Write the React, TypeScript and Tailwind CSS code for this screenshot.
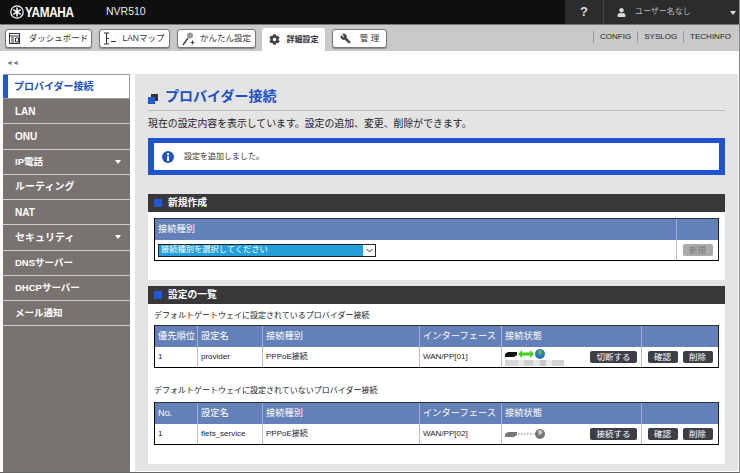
import { ChevronDown, Wrench } from 'lucide-react';
import { FaCog, FaUser } from 'react-icons/fa';

const JP = "font-['Liberation_Sans','Noto_Sans_CJK_JP',sans-serif]";

const menu = [
  { label: 'LAN', big: true },
  { label: 'ONU', big: true },
  { label: 'IP電話', arrow: true },
  { label: 'ルーティング', big: true },
  { label: 'NAT', big: true },
  { label: 'セキュリティ', arrow: true, big: true },
  { label: 'DNSサーバー' },
  { label: 'DHCPサーバー' },
  { label: 'メール通知' },
];

function DashIcon() {
  return (
    <svg width="11" height="11" viewBox="0 0 11 11" fill="none" stroke="#333" strokeWidth="1">
      <rect x="0.5" y="0.5" width="10" height="10" />
      <path d="M0.5 3H10.5M2 5H5M2 7H5M2 9H5M6.5 5H9.5V9H6.5Z" />
    </svg>
  );
}

function MapIcon() {
  return (
    <svg width="12" height="13" viewBox="0 0 12 13" fill="none" stroke="#333" strokeWidth="1">
      <path d="M0 1H5M2.5 1V12M0 12H5M2.5 6.5H5M7 9.5H12" />
    </svg>
  );
}

function WandIcon() {
  return (
    <svg width="13" height="14" viewBox="0 0 13 14" fill="none">
      <path d="M1 13L6 6" stroke="#444" strokeWidth="1.4" />
      <circle cx="8" cy="3.5" r="3" fill="#999" />
      <path d="M8.5 10.5H12.5M10.5 8.5V12.5" stroke="#444" strokeWidth="1" />
    </svg>
  );
}

function Tab({ icon, label, gap = 'gap-[9px]', w }: { icon: React.ReactNode; label: string; gap?: string; w: string }) {
  return (
    <div className={`flex h-[19px] items-center justify-center rounded-[3px] border border-[#777] bg-white text-[8.5px] text-[#333] shadow-[0_1px_1px_#888] ${gap} ${w}`}>
      {icon}
      <span>{label}</span>
    </div>
  );
}

function SectionHead({ title }: { title: string }) {
  return (
    <div className="flex h-[18px] items-center gap-[6px] bg-[#383838] pl-[6px] text-[9.75px] font-bold text-white">
      <span className="h-[8px] w-[8px] bg-[#2058d8]" />
      {title}
    </div>
  );
}

function DarkBtn({ label, w }: { label: string; w: string }) {
  return (
    <span className={`flex h-[12px] items-center justify-center rounded-[2px] bg-[#3c3f48] text-[8.5px] text-white ${w}`}>{label}</span>
  );
}

function Status({ up }: { up: boolean }) {
  return (
    <div className="flex flex-col gap-[1px]">
      <svg width="42" height="10" viewBox="0 0 42 10">
        <path d="M0 5L3 3H12V6L9 8H0Z" fill={up ? '#111' : '#777'} />
        {up ? (
          <path d="M13 5L17 1V3.5H25V1L29 5L25 9V6.5H17V9Z" fill="#44d018" />
        ) : (
          <path d="M13 5H29" stroke="#bbb" strokeWidth="2" strokeDasharray="1.5 1.5" />
        )}
        <circle cx="35" cy="5" r="5" fill={up ? '#2a78b8' : '#777'} />
        <path d="M33 1.5L36.5 1L37.5 4L34 6.5Z" fill={up ? '#5cb85c' : '#ccc'} />
      </svg>
      {up && (
        <div className="flex h-[6px] w-[59px]">
          <span className="w-[13px] bg-[#d8d8d8]" />
          <span className="w-[6px] bg-[#e8e8e8]" />
          <span className="w-[9px] bg-[#d0d0d0]" />
          <span className="w-[7px] bg-[#e4e4e4]" />
          <span className="w-[6px] bg-[#c8c8c8]" />
          <span className="w-[6px] bg-[#ececec]" />
          <span className="w-[12px] bg-[#d4d4d4]" />
        </div>
      )}
    </div>
  );
}

function ConnTable({ first, firstValue, name, pp, up }: { first: string; firstValue: string; name: string; pp: string; up: boolean }) {
  const head = 'flex items-center whitespace-nowrap border-r border-[#9db0d6] pl-[3px]';
  const cell = 'flex items-center border-r border-[#bbb] pl-[3px]';
  return (
    <div className="mx-[6px] border-b border-l border-r border-b-black border-l-black border-r-[#222]">
      <div className="grid h-[22px] grid-cols-[43px_65px_157px_82px_140px_1fr] border-t border-[#333] bg-[#6480b9] text-[9.25px] text-white">
        <div className={head}>{first}</div>
        <div className={head}>設定名</div>
        <div className={head}>接続種別</div>
        <div className={head}>インターフェース</div>
        <div className={head}>接続状態</div>
        <div />
      </div>
      <div className="grid h-[20px] grid-cols-[43px_65px_157px_82px_140px_1fr] bg-white text-[8px] text-[#222]">
        <div className={cell}>{firstValue}</div>
        <div className={cell}>{name}</div>
        <div className={cell}>PPPoE接続</div>
        <div className={cell}>WAN/PP[{pp}]</div>
        <div className={`${cell} justify-between pr-[4px]`}>
          <Status up={up} />
          <DarkBtn label={up ? '切断する' : '接続する'} w="w-[47px]" />
        </div>
        <div className="flex items-center justify-center gap-[5px]">
          <DarkBtn label="確認" w="w-[30px]" />
          <DarkBtn label="削除" w="w-[30px]" />
        </div>
      </div>
    </div>
  );
}

export default function App() {
  return (
    <div className={`${JP} flex h-[473px] w-[740px] flex-col overflow-hidden border-b border-r border-b-[#666] border-r-[#888] bg-white`}>
      <div className="flex h-[24px] items-center bg-[#0f0f0f] text-white">
        <svg className="ml-[10px]" width="14" height="14" viewBox="0 0 14 14" fill="none" stroke="#fff">
          <circle cx="7" cy="7" r="6.2" strokeWidth="1.2" />
          <path d="M7 2.5V11.5M3.2 4.7L10.8 9.3M3.2 9.3L10.8 4.7" strokeWidth="1.5" />
        </svg>
        <span className="ml-[1px] w-[48px] origin-left scale-x-[0.84] text-[14px] font-bold tracking-tight">YAMAHA</span>
        <span className="ml-[33px] text-[10.5px] text-[#e8e8e8]">NVR510</span>
        <div className="ml-auto flex h-full w-[174px] bg-[#2a2c2e] text-[#ddd]">
          <div className="flex w-[39px] items-center justify-center border-r border-[#444] text-[13px] font-bold">?</div>
          <div className="flex flex-1 items-center pl-[13px] text-[8px] text-[#bbb]">
            <FaUser size={9} color="#ddd" />
            <span className="ml-[9px]">ユーザー名なし</span>
            <span className="ml-auto mr-[3px] mt-[1px] h-0 w-0 border-x-[3px] border-t-[4px] border-x-transparent border-t-[#ddd]" />
          </div>
        </div>
      </div>

      <div className="flex h-[27px] items-end border-t border-[#777] bg-[#c9c9c9]">
        <div className="mb-[3px] ml-[5px] flex gap-[7px]">
          <Tab icon={<DashIcon />} label="ダッシュボード" w="w-[87px]" />
          <Tab icon={<MapIcon />} label="LANマップ" gap="gap-[6px]" w="w-[71px]" />
          <Tab icon={<WandIcon />} label="かんたん設定" gap="gap-[5px]" w="w-[79px]" />
        </div>
        <div className="ml-[6px] flex h-[23px] w-[63px] items-center justify-center gap-[7px] rounded-t-[3px] bg-white text-[8px] font-bold text-[#333]">
          <FaCog size={11} color="#444" />
          詳細設定
        </div>
        <div className="mb-[3px] ml-[7px]">
          <Tab icon={<Wrench size={11} fill="#444" stroke="#444" className="-scale-x-100" />} label="管 理" w="w-[55px]" />
        </div>
        <div className="mb-[8px] ml-auto mr-[8px] flex text-[8px] text-[#222]">
          <span className="border-l border-[#999] px-[6px]">CONFIG</span>
          <span className="border-l border-[#999] px-[6px]">SYSLOG</span>
          <span className="border-l border-[#999] pl-[6px]">TECHINFO</span>
        </div>
      </div>

      <div className="flex flex-1 flex-col">
        <div className="flex h-[23px] items-center pl-[6px] text-[7px] leading-none tracking-[-1px] text-[#777]">◄◄</div>
        <div className="flex flex-1 gap-[5px]">
          <div className="ml-[3px] flex w-[127px] flex-col bg-[#787370]">
            <div className="flex h-[25px] shrink-0 items-center border border-l-0 border-[#999] bg-white">
              <span className="h-full w-[5px] bg-[#2058d8]" />
              <span className="ml-[6px] text-[10px] font-bold text-[#1a50c8]">プロバイダー接続</span>
            </div>
            {menu.map((item) => (
              <div key={item.label} className="flex h-[25.25px] items-center border-b border-[#cfcdcb] pl-[12px] pr-[9px] font-bold text-white">
                <span className={item.big ? 'text-[10px]' : 'text-[9.5px]'}>{item.label}</span>
                {item.arrow && <span className="ml-auto h-0 w-0 border-x-[3px] border-t-[4px] border-x-transparent border-t-white" />}
              </div>
            ))}
          </div>

          <div className="mb-[1px] mr-[1px] flex flex-1 flex-col bg-[#e4e4e4] px-[13px]">
            <div className="flex h-[37px] items-end border-b border-[#bbb] pb-[4px]">
              <svg className="mb-[2px]" width="10" height="10" viewBox="0 0 10 10">
                <rect x="3" y="0" width="7" height="7" fill="#333" />
                <rect x="0" y="3" width="7" height="7" fill="#2058d8" />
              </svg>
              <span className="ml-[7px] text-[14px] font-bold leading-[20px] text-[#1a50c8]">プロバイダー接続</span>
            </div>
            <p className="mt-[6px] text-[9.9px] leading-[14px] text-[#222]">現在の設定内容を表示しています。設定の追加、変更、削除ができます。</p>
            <div className="mt-[7px] flex h-[37px] items-center border-x-[6px] border-y-[5px] border-[#1e54d0] bg-white pl-[8px]">
              <svg width="12" height="12" viewBox="0 0 12 12">
                <circle cx="6" cy="6" r="6" fill="#1e54d0" />
                <rect x="5" y="2" width="2" height="2" fill="#fff" />
                <rect x="5" y="5" width="2" height="5" fill="#fff" />
              </svg>
              <span className="ml-[10px] text-[8px] text-[#333]">設定を追加しました。</span>
            </div>

            <div className="mt-[19px]">
              <SectionHead title="新規作成" />
            </div>
            <div className="h-[68px] bg-white pt-[6px]">
              <div className="mx-[6px] border-b border-l border-r border-b-black border-l-black border-r-[#222]">
                <div className="flex h-[22px] border-t border-[#333] bg-[#6480b9] text-[9.25px] text-white">
                  <div className="flex flex-1 items-center border-r border-[#9db0d6] pl-[3px]">接続種別</div>
                  <div className="w-[41px]" />
                </div>
                <div className="flex h-[20px] bg-white">
                  <div className="flex flex-1 items-center border-r border-[#bbb] pl-[3px]">
                    <div className="flex h-[13px] w-[218px] border border-[#222] bg-white">
                      <span className="flex w-[204px] items-center bg-[#23a0dc] pl-[2px] text-[8.25px] text-white">接続種別を選択してください</span>
                      <ChevronDown size={11} strokeWidth={2} className="ml-[1px] text-[#222]" />
                    </div>
                  </div>
                  <div className="flex w-[41px] items-center justify-center">
                    <span className="flex h-[12px] w-[30px] items-center justify-center rounded-[2px] bg-[#aaa] text-[8.5px] text-[#777]">新規</span>
                  </div>
                </div>
              </div>
            </div>

            <div className="mt-[6px]">
              <SectionHead title="設定の一覧" />
            </div>
            <div className="flex-1 bg-white">
              <p className="ml-[6px] flex h-[21px] items-end pb-[3px] text-[8px] text-[#222]">デフォルトゲートウェイに設定されているプロバイダー接続</p>
              <ConnTable first="優先順位" firstValue="1" name="provider" pp="01" up />
              <p className="ml-[6px] mt-[12px] flex h-[22px] items-end pb-[5px] text-[8px] text-[#222]">デフォルトゲートウェイに設定されていないプロバイダー接続</p>
              <ConnTable first="No." firstValue="1" name="flets_service" pp="02" up={false} />
            </div>
            <div className="h-[7px]" />
          </div>
        </div>
      </div>
    </div>
  );
}
